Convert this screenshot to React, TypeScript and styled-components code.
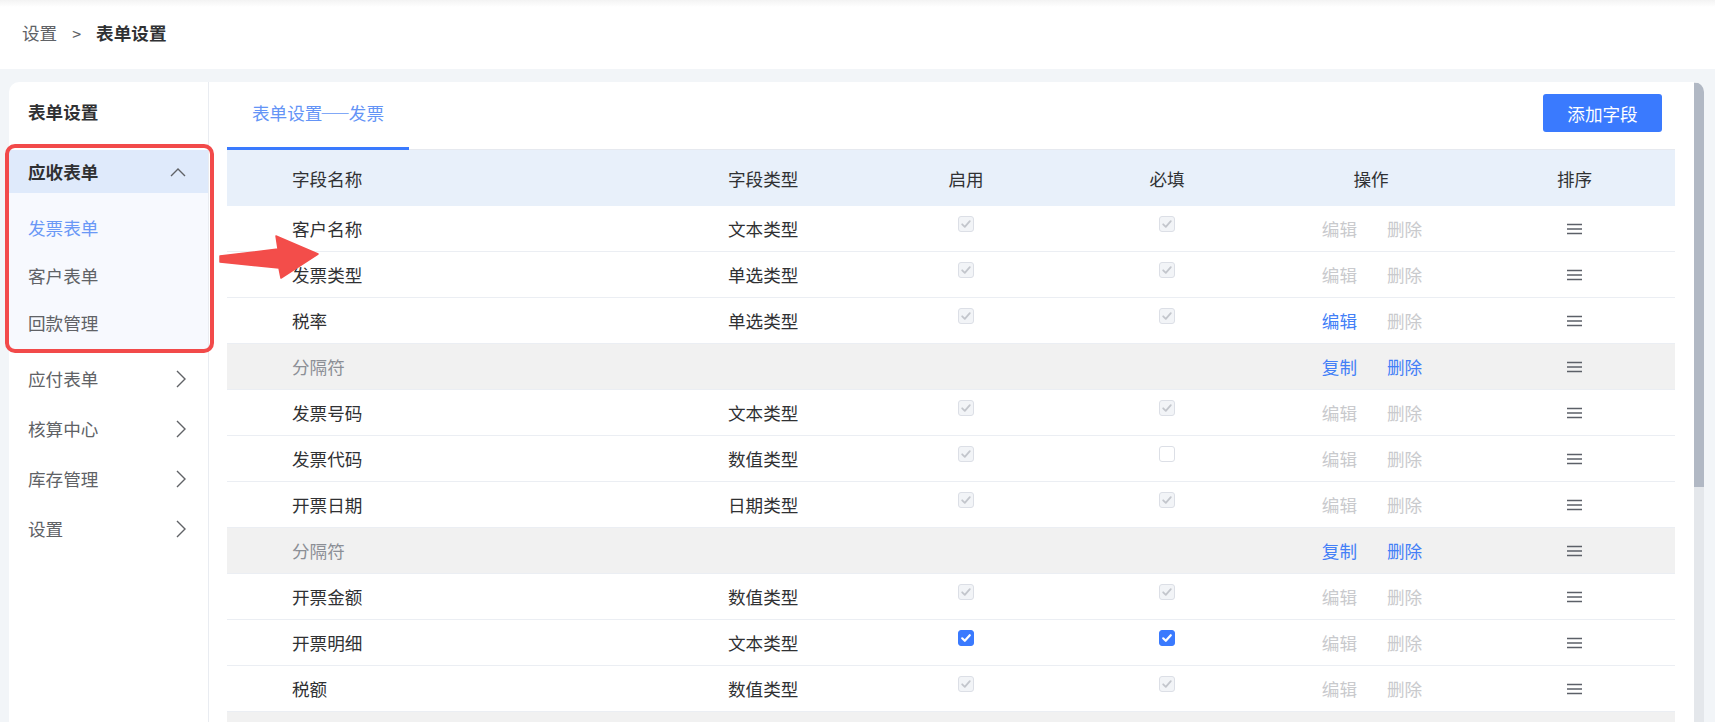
import React from "react";
import styled, { createGlobalStyle } from "styled-components";

const GlobalStyle = createGlobalStyle`
  html, body {
    margin: 0;
    padding: 0;
    background: #f2f5f8;
    font-family: "Noto Sans CJK SC", "Noto Sans", "Liberation Sans", sans-serif;
    color: #303133;
  }
  * { box-sizing: border-box; }
`;

const Page = styled.div`
  position: relative;
  width: 1715px;
  height: 722px;
  overflow: hidden;
`;

const TopBar = styled.div`
  height: 69px;
  display: flex;
  align-items: center;
  padding: 0 0 4px 22px;
  background: linear-gradient(to bottom, #f3f3f3 0, #fff 7px);
  font-size: 17.6px;
`;

const Crumb = styled.span<{ $current?: boolean }>`
  color: ${(p) => (p.$current ? "#303133" : "#606266")};
  font-weight: ${(p) => (p.$current ? 700 : 400)};
`;

const CrumbSep = styled.span`
  color: #606266;
  margin: 0 15px;
  font-size: 16px;
`;

const Main = styled.div`
  padding: 13px 11px 0 9px;
`;

const Card = styled.div`
  display: flex;
  height: 640px;
  background: #fff;
  border-radius: 10px 10px 0 0;
  overflow: hidden;
`;

const Sidebar = styled.div`
  width: 200px;
  flex-shrink: 0;
  border-right: 1px solid #e9ecf1;
  font-size: 17.6px;
`;

const SideTitle = styled.div`
  height: 68px;
  line-height: 60px;
  padding-left: 19px;
  font-weight: 700;
  color: #303133;
`;

const GroupHead = styled.div<{ $open?: boolean }>`
  display: flex;
  align-items: center;
  justify-content: space-between;
  height: ${(p) => (p.$open ? "43px" : "50px")};
  padding: 0 22px 0 19px;
  background: ${(p) => (p.$open ? "#dfeafb" : "transparent")};
  color: ${(p) => (p.$open ? "#303133" : "#606266")};
  font-weight: ${(p) => (p.$open ? 700 : 400)};
`;

const SubList = styled.div`
  background: #f7f9fe;
  padding: 11px 0 3px;
  margin-bottom: 4px;
`;

const SubItem = styled.div<{ $active?: boolean }>`
  height: 47.5px;
  line-height: 47.5px;
  padding-left: 19px;
  color: ${(p) => (p.$active ? "#6a98f6" : "#606266")};
`;

const Pane = styled.div`
  flex: 1;
  min-width: 0;
  height: 640px;
  overflow: hidden;
  padding: 0 19px 0 18px;
`;

const ScrollTrack = styled.div`
  width: 10px;
  flex-shrink: 0;
  background: #e4e7eb;
  padding-top: 1px;
`;

const ScrollThumb = styled.div`
  height: 404px;
  background: #b1b8c4;
`;

const TabBar = styled.div`
  display: flex;
  justify-content: space-between;
  height: 68px;
  border-bottom: 1px solid #e6e9ef;
`;

const Tab = styled.div`
  width: 182px;
  padding-top: 18px;
  line-height: 26px;
  text-align: center;
  font-size: 17.6px;
  color: #6494f6;
  border-bottom: 3px solid #3a7afe;
  margin-bottom: -1px;
  white-space: nowrap;
`;

const Dash = styled.span`
  display: inline-block;
  width: 1.5em;
  text-align: center;
  font-feature-settings: "fwid";
  transform: scaleX(1.8);
`;

const AddButton = styled.button`
  margin: 12px 13px 0 0;
  width: 119px;
  height: 38px;
  border: none;
  border-radius: 3px;
  background: #3a7afe;
  color: #fff;
  font-family: inherit;
  font-size: 17.6px;
`;

const Grid = styled.div<{ $head?: boolean; $sep?: boolean }>`
  display: grid;
  grid-template-columns: 501px 138px 200px 202px 206px 201px;
  align-items: center;
  height: ${(p) => (p.$head ? "56px" : "46px")};
  background: ${(p) => (p.$head ? "#e8f0fa" : p.$sep ? "#f1f1f1" : "#fff")};
  border-bottom: ${(p) => (p.$head ? "none" : "1px solid #ebeef3")};
  font-size: 17.6px;
  color: #303133;
`;

const NameCell = styled.div<{ $muted?: boolean }>`
  padding-left: 65px;
  color: ${(p) => (p.$muted ? "#8c8f96" : "#303133")};
`;

const Cell = styled.div<{ $center?: boolean }>`
  display: flex;
  align-items: center;
  justify-content: ${(p) => (p.$center ? "center" : "flex-start")};
`;

const Actions = styled.div`
  display: flex;
  justify-content: center;
  gap: 30px;
  padding-left: 2px;
`;

const ActionLink = styled.span<{ $on?: boolean }>`
  color: ${(p) => (p.$on ? "#437ff7" : "#c9cacd")};
`;

const Box = styled.span<{ $state: "locked" | "checked" | "empty" }>`
  width: 16px;
  height: 16px;
  border-radius: 3px;
  display: inline-flex;
  align-items: center;
  justify-content: center;
  margin-top: -9px;
  background: ${(p) =>
    p.$state === "checked" ? "#3a7afe" : p.$state === "locked" ? "#f2f4f7" : "#fff"};
  border: 1px solid
    ${(p) => (p.$state === "checked" ? "#3a7afe" : "#dcdfe6")};
`;

const Overlay = styled.svg`
  position: absolute;
  left: 0;
  top: 0;
  pointer-events: none;
`;

const Highlight = styled.div`
  position: absolute;
  left: 5px;
  top: 144px;
  width: 209px;
  height: 209px;
  border: 4px solid #f24a4a;
  border-radius: 10px;
  pointer-events: none;
`;

type BoxState = "locked" | "checked" | "empty";

const Check = ({ state }: { state: BoxState }) => (
  <Box $state={state}>
    {state !== "empty" && (
      <svg width="12" height="12" viewBox="0 0 12 12">
        <path
          d="M2.2 6.3 L4.8 8.8 L9.8 3.2"
          fill="none"
          stroke={state === "checked" ? "#fff" : "#c3c6cc"}
          strokeWidth={state === "checked" ? 2.2 : 1.8}
          strokeLinecap="round"
          strokeLinejoin="round"
        />
      </svg>
    )}
  </Box>
);

const DragIcon = () => (
  <svg width="15" height="12" viewBox="0 0 15 12">
    <path d="M0 1.5H15M0 6H15M0 10.5H15" stroke="#5c6068" strokeWidth="1.4" />
  </svg>
);

const ChevronRight = () => (
  <svg width="10" height="18" viewBox="0 0 10 18">
    <path d="M1 1 L9 9 L1 17" fill="none" stroke="#606266" strokeWidth="1.4" />
  </svg>
);

const ChevronUp = () => (
  <svg width="16" height="10" viewBox="0 0 16 10">
    <path d="M1 9 L8 2 L15 9" fill="none" stroke="#606266" strokeWidth="1.4" />
  </svg>
);

type Row =
  | { sep: true; tail?: boolean }
  | {
      sep?: false;
      name: string;
      type: string;
      on: BoxState;
      req: BoxState;
      edit?: boolean;
    };

const rows: Row[] = [
  { name: "客户名称", type: "文本类型", on: "locked", req: "locked" },
  { name: "发票类型", type: "单选类型", on: "locked", req: "locked" },
  { name: "税率", type: "单选类型", on: "locked", req: "locked", edit: true },
  { sep: true },
  { name: "发票号码", type: "文本类型", on: "locked", req: "locked" },
  { name: "发票代码", type: "数值类型", on: "locked", req: "empty" },
  { name: "开票日期", type: "日期类型", on: "locked", req: "locked" },
  { sep: true },
  { name: "开票金额", type: "数值类型", on: "locked", req: "locked" },
  { name: "开票明细", type: "文本类型", on: "checked", req: "checked" },
  { name: "税额", type: "数值类型", on: "locked", req: "locked" },
  // only the top edge of this row is on screen
  { sep: true, tail: true },
];

const heads = ["字段名称", "字段类型", "启用", "必填", "操作", "排序"];

export default function App() {
  return (
    <Page>
      <GlobalStyle />
      <TopBar>
        <Crumb>设置</Crumb>
        <CrumbSep>&gt;</CrumbSep>
        <Crumb $current>表单设置</Crumb>
      </TopBar>
      <Main>
        <Card>
          <Sidebar>
            <SideTitle>表单设置</SideTitle>
            <GroupHead $open>
              应收表单
              <ChevronUp />
            </GroupHead>
            <SubList>
              <SubItem $active>发票表单</SubItem>
              <SubItem>客户表单</SubItem>
              <SubItem>回款管理</SubItem>
            </SubList>
            {["应付表单", "核算中心", "库存管理", "设置"].map((g) => (
              <GroupHead key={g}>
                {g}
                <ChevronRight />
              </GroupHead>
            ))}
          </Sidebar>
          <Pane>
            <TabBar>
              <Tab>
                表单设置<Dash>—</Dash>发票
              </Tab>
              <AddButton>添加字段</AddButton>
            </TabBar>
            <Grid $head>
              <NameCell>{heads[0]}</NameCell>
              <Cell>{heads[1]}</Cell>
              {heads.slice(2).map((h) => (
                <Cell key={h} $center>
                  {h}
                </Cell>
              ))}
            </Grid>
            {rows.map((r, i) =>
              r.sep ? (
                r.tail ? (
                  <Grid key={i} $sep />
                ) : (
                  <Grid key={i} $sep>
                    <NameCell $muted>分隔符</NameCell>
                    <Cell />
                    <Cell />
                    <Cell />
                    <Actions>
                      <ActionLink $on>复制</ActionLink>
                      <ActionLink $on>删除</ActionLink>
                    </Actions>
                    <Cell $center>
                      <DragIcon />
                    </Cell>
                  </Grid>
                )
              ) : (
                <Grid key={i}>
                  <NameCell>{r.name}</NameCell>
                  <Cell>{r.type}</Cell>
                  <Cell $center>
                    <Check state={r.on} />
                  </Cell>
                  <Cell $center>
                    <Check state={r.req} />
                  </Cell>
                  <Actions>
                    <ActionLink $on={r.edit}>编辑</ActionLink>
                    <ActionLink>删除</ActionLink>
                  </Actions>
                  <Cell $center>
                    <DragIcon />
                  </Cell>
                </Grid>
              )
            )}
          </Pane>
          <ScrollTrack>
            <ScrollThumb />
          </ScrollTrack>
        </Card>
      </Main>
      <Highlight />
      <Overlay width="1715" height="722" viewBox="0 0 1715 722">
        <polygon
          points="220,256 278,249 276,236 318,254 281,278 279,268 220,262"
          fill="#f34d4a"
          stroke="#f34d4a"
          strokeWidth="1.5"
          strokeLinejoin="round"
        />
      </Overlay>
    </Page>
  );
}
